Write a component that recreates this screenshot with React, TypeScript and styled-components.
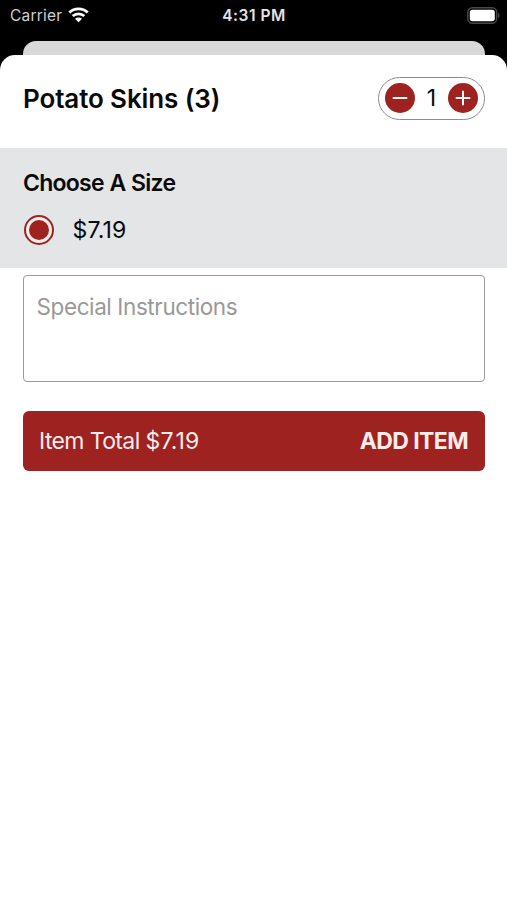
import React, { useState } from "react";
import styled, { createGlobalStyle } from "styled-components";

const RED = "#9e2220";

const GlobalStyle = createGlobalStyle`
  * { box-sizing: border-box; }
  body {
    margin: 0;
    background: #000;
    font-family: Inter, Roboto, "Liberation Sans", sans-serif;
    color: #0a0a0a;
  }
  button { font: inherit; border: 0; padding: 0; cursor: pointer; }
`;

const Screen = styled.div`
  display: flex;
  flex-direction: column;
  width: 507px;
  height: 900px;
  overflow: hidden;
  background: #000;
`;

const StatusBar = styled.header`
  display: grid;
  grid-template-columns: 1fr auto 1fr;
  align-items: center;
  height: 30px;
  margin-bottom: 11px;
  padding: 0 9px 0 10px;
  color: #e4e4e4;
`;

const Carrier = styled.div`
  display: flex;
  align-items: center;
  gap: 6px;
  font-size: 15.5px;
  letter-spacing: 0.2px;
  color: #cfcfcf;
`;

const Clock = styled.time`
  font-size: 15.5px;
  font-weight: 600;
  letter-spacing: 0.5px;
`;

const Battery = styled.svg`
  justify-self: end;
  margin-right: -2px;
`;

const BackCard = styled.div`
  flex: none;
  height: 14px;
  margin: 0 22px 0 22.5px;
  border-radius: 13px 13px 0 0;
  background: #d8d8d8;
`;

const Sheet = styled.main`
  flex: 1;
  border-radius: 15px 15px 0 0;
  background: #fff;
`;

const TitleRow = styled.div`
  display: flex;
  align-items: center;
  justify-content: space-between;
  height: 93px;
  padding: 0 22px 6px 23px;
`;

const Title = styled.h1`
  margin: 0;
  font-size: 26px;
  line-height: 32px;
  font-weight: 600;
  letter-spacing: -0.12px;
`;

const Stepper = styled.div`
  display: flex;
  align-items: center;
  justify-content: space-between;
  width: 107px;
  height: 43px;
  padding: 0 6px 1px;
  border: 1.5px solid #8c8c8c;
  border-radius: 22px;
`;

const StepButton = styled.button`
  display: flex;
  width: 30px;
  height: 30px;
  border-radius: 50%;
  background: ${RED};
`;

const Quantity = styled.span`
  font-size: 23px;
  line-height: 30px;
`;

const SizeSection = styled.section`
  height: 120px;
  padding: 21px 23px 0;
  background: #e3e5e6;
`;

const SectionTitle = styled.h2`
  margin: 0;
  font-size: 23px;
  line-height: 28px;
  font-weight: 600;
  letter-spacing: -0.75px;
  word-spacing: 0.6px;
`;

const Option = styled.label`
  display: flex;
  align-items: center;
  gap: 18.5px;
  height: 30px;
  margin: 18px 0 0 1px;
  font-size: 23px;
`;

const Radio = styled.span`
  display: flex;
  align-items: center;
  justify-content: center;
  width: 30px;
  height: 30px;
  border: 2px solid ${RED};
  border-radius: 50%;
  background: #f3eeee;

  &::after {
    content: "";
    width: 20px;
    height: 20px;
    border-radius: 50%;
    background: ${RED};
  }
`;

const Price = styled.span`
  letter-spacing: 0.15px;
`;

const Instructions = styled.textarea`
  display: block;
  width: 462px;
  height: 107px;
  margin: 7px 0 0 23px;
  padding: 17px 12.5px;
  border: 1.5px solid #9b9b9b;
  border-radius: 4px;
  outline: 0;
  resize: none;
  background: #fff;
  font: 22.5px/28px Inter, sans-serif;
  letter-spacing: -0.4px;

  &::placeholder { color: #999; opacity: 1; }
`;

const AddButton = styled.button`
  display: flex;
  align-items: center;
  justify-content: space-between;
  width: 462px;
  height: 60px;
  margin: 29px 0 0 23px;
  && { padding: 0 17px 0 16px; }
  border-radius: 6px;
  background: ${RED};
  color: #fbeceb;
`;

const Total = styled.span`
  font-size: 23px;
  letter-spacing: -0.62px;
  white-space: pre;
`;

const Action = styled.span`
  font-size: 23px;
  font-weight: 700;
  letter-spacing: -0.6px;
`;

const WifiIcon = () => (
  <svg width="21" height="16" viewBox="0 0 21 16" fill="none" stroke="#fff" strokeWidth="2.7">
    <path d="M1.3 5.5C6.4.6 14.6.6 19.7 5.5" />
    <path d="M4.7 9.1C8 6 13 6 16.3 9.1" />
    <path d="M10.5 15.3 7 11.8C9 10.1 12 10.1 14 11.8Z" fill="#fff" stroke="none" />
  </svg>
);

const StepIcon = ({ plus = false }: { plus?: boolean }) => (
  <svg width="30" height="30" viewBox="0 0 30 30" fill="none" stroke="#fff" strokeWidth="2" strokeLinecap="round">
    <path d={plus ? "M8.5 15h13M15 8.5v13" : "M8.5 15h13"} />
  </svg>
);

export default function App() {
  const [quantity, setQuantity] = useState(1);
  const total = (7.19 * quantity).toFixed(2);

  return (
    <>
      <GlobalStyle />
      <Screen>
        <StatusBar>
          <Carrier>
            <span>Carrier</span>
            <WifiIcon />
          </Carrier>
          <Clock>4:31 PM</Clock>
          <Battery width="33" height="17" viewBox="0 0 33 17" fill="none">
            <rect x="0.8" y="0.8" width="28.9" height="15.4" rx="4.5" stroke="#484848" strokeWidth="1.4" />
            <rect x="2.8" y="2.8" width="25" height="11.4" rx="2.7" fill="#fff" />
            <path d="M31 6c2 .8 2 4.200 0 5Z" fill="#484848" />
          </Battery>
        </StatusBar>
        <BackCard />
        <Sheet>
          <TitleRow>
            <Title>Potato Skins (3)</Title>
            <Stepper>
              <StepButton aria-label="Decrease" onClick={() => setQuantity(Math.max(1, quantity - 1))}>
                <StepIcon />
              </StepButton>
              <Quantity>{quantity}</Quantity>
              <StepButton aria-label="Increase" onClick={() => setQuantity(quantity + 1)}>
                <StepIcon plus />
              </StepButton>
            </Stepper>
          </TitleRow>
          <SizeSection>
            <SectionTitle>Choose A Size</SectionTitle>
            <Option>
              <Radio role="radio" aria-checked="true" />
              <Price>$7.19</Price>
            </Option>
          </SizeSection>
          <Instructions placeholder="Special Instructions" />
          <AddButton>
            <Total>Item Total <Price>${total}</Price></Total>
            <Action>ADD ITEM</Action>
          </AddButton>
        </Sheet>
      </Screen>
    </>
  );
}
